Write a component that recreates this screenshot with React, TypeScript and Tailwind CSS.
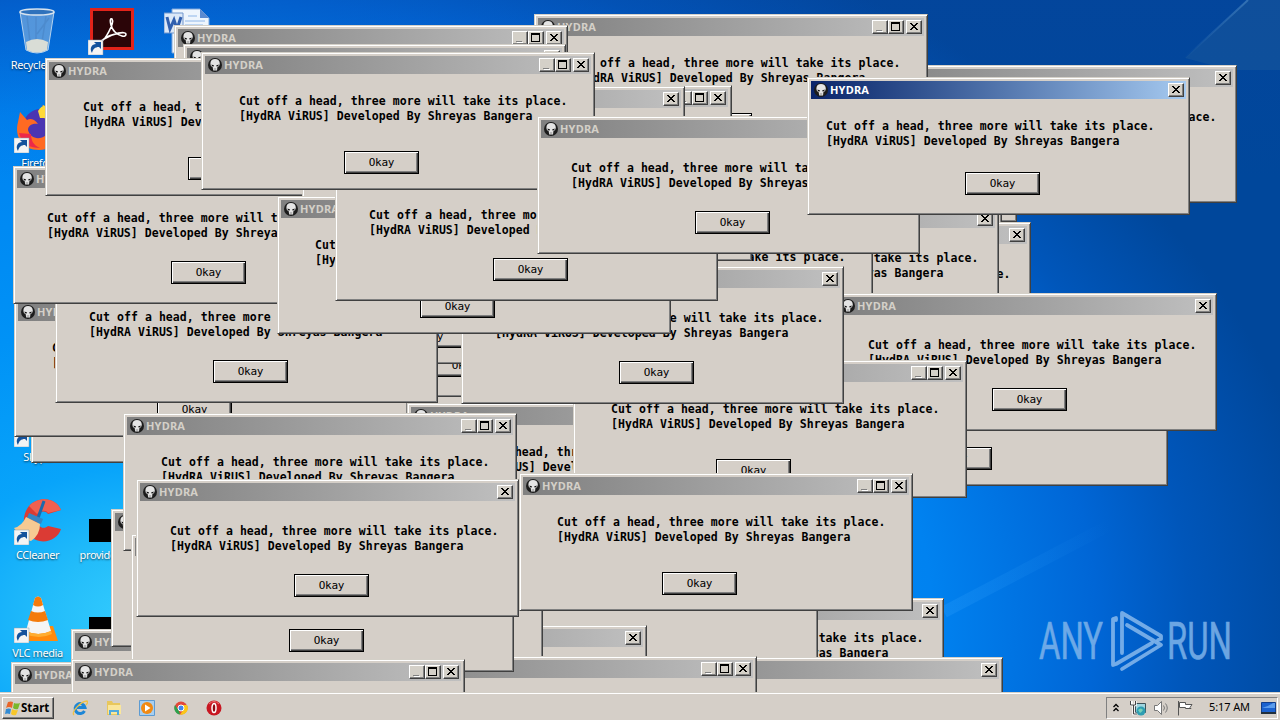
import clsx from 'clsx';
import type { ReactNode } from 'react';

type Win = {
  x: number;
  y: number;
  // "sizable" windows carry minimize / maximize buttons
  kind: 'sizable' | 'fixed' | 'active' | 'shifted';
};

// back to front
const WINDOWS: Win[] = [
  { x: 854, y: 65, kind: 'fixed' },
  { x: 31, y: 325, kind: 'fixed' },
  { x: 200, y: 340, kind: 'fixed' },
  { x: 14, y: 299, kind: 'sizable' },
  { x: 269, y: 259, kind: 'fixed' },
  { x: 250, y: 226, kind: 'sizable' },
  { x: 55, y: 265, kind: 'fixed' },
  { x: 13, y: 166, kind: 'fixed' },
  { x: 634, y: 84, kind: 'fixed' },
  { x: 619, y: 86, kind: 'fixed' },
  { x: 534, y: 14, kind: 'sizable' },
  { x: 174, y: 25, kind: 'sizable' },
  { x: 183, y: 44, kind: 'fixed' },
  { x: 45, y: 58, kind: 'sizable' },
  { x: 338, y: 85, kind: 'sizable' },
  { x: 302, y: 86, kind: 'fixed' },
  { x: 648, y: 222, kind: 'fixed' },
  { x: 616, y: 206, kind: 'fixed' },
  { x: 479, y: 208, kind: 'sizable' },
  { x: 774, y: 348, kind: 'sizable' },
  { x: 834, y: 293, kind: 'fixed' },
  { x: 407, y: 403, kind: 'sizable' },
  { x: 573, y: 360, kind: 'sizable' },
  { x: 461, y: 266, kind: 'fixed' },
  { x: 369, y: 123, kind: 'fixed' },
  { x: 277, y: 196, kind: 'sizable' },
  { x: 335, y: 163, kind: 'fixed' },
  { x: 201, y: 52, kind: 'sizable' },
  { x: 537, y: 116, kind: 'fixed' },
  { x: 561, y: 598, kind: 'shifted' },
  { x: 424, y: 535, kind: 'sizable' },
  { x: 264, y: 625, kind: 'fixed' },
  { x: 149, y: 570, kind: 'sizable' },
  { x: 620, y: 657, kind: 'fixed' },
  { x: 363, y: 656, kind: 'sizable' },
  { x: 71, y: 629, kind: 'fixed' },
  { x: 111, y: 509, kind: 'fixed' },
  { x: 123, y: 413, kind: 'sizable' },
  { x: 131, y: 534, kind: 'fixed' },
  { x: 136, y: 479, kind: 'fixed' },
  { x: 519, y: 473, kind: 'sizable' },
  { x: 11, y: 662, kind: 'fixed' },
  { x: 71, y: 659, kind: 'sizable' },
  { x: 807, y: 77, kind: 'active' },
];

const TEXT_POS = {
  sizable: 'ml-[34px] mt-[20px]',
  fixed: 'ml-[30px] mt-[23px]',
  active: 'ml-[15px] mt-[20px]',
  shifted: 'ml-[30px] mt-[11px]',
};

const BUTTON_POS = {
  sizable: 'ml-[139px] mt-[27px]',
  fixed: 'ml-[154px] mt-[20px]',
  active: 'ml-[154px] mt-[23px]',
  shifted: 'ml-[154px] mt-[32px]',
};

function SkullIcon() {
  return (
    <svg width="16" height="16" viewBox="0 0 16 16" className="shrink-0">
      <circle cx="8" cy="8" r="7" fill="#1c1c1c" />
      <path d="M3.4 6.2C3.4 3.5 5.4 2 8 2s4.800 1.500 4.800 4.200c0 1.500-.5 2-.8 3l-1.500.6L10 13.500H6.200L5.600 9.800 4 9.200c-.2-1-.6-1.500-.6-3z" fill="#e4e4e4" />
      <path d="M4.500 7.600l2.600.8-.5 1.200-1.700-.5zM11.700 7.600l-2.600.8.5 1.200 1.700-.5z" fill="#111" />
      <path d="M7.300 11v2M8.700 11v2" stroke="#777" strokeWidth=".5" />
    </svg>
  );
}

function CaptionButton({ children }: { children: ReactNode }) {
  return (
    <span className="flex h-[14px] w-4 border border-t-white border-r-[#404040] border-b-[#404040] border-l-white bg-[#d4d0c8] shadow-[inset_-1px_-1px_#808080]">
      <svg width="14" height="12" viewBox="0 0 14 12" shapeRendering="crispEdges">
        {children}
      </svg>
    </span>
  );
}

function HydraWindow({ x, y, kind }: Win) {
  const sizable = kind === 'sizable';
  const active = kind === 'active';

  return (
    <div
      className={clsx(
        'absolute h-[138px] border border-t-[#d4d0c8] border-r-[#404040] border-b-[#404040] border-l-[#d4d0c8] bg-[#d5cfc8] p-[3px] shadow-[inset_1px_1px_#fff,inset_-1px_-1px_#808080]',
        sizable ? 'w-[394px]' : 'w-[383px]',
      )}
      style={{ left: x, top: y }}
    >
      <div
        className={clsx(
          'flex h-[18px] items-center bg-linear-to-r pr-0.5 pl-0.5',
          active ? 'from-[#0a246a] to-[#a6caf0]' : 'from-[#808080] to-[#c0c0c0]',
        )}
      >
        <SkullIcon />
        <span
          className={clsx(
            'ml-px grow font-["Noto_Sans",sans-serif] text-[11px] leading-[18px] font-bold tracking-[0.2px]',
            active ? 'text-white' : 'text-[#d4d0c8]',
          )}
        >
          HYDRA
        </span>
        {sizable && (
          <span className="mr-0.5 flex">
            <CaptionButton>
              <path d="M3 9h6v1H3z" fill="#808080" />
              <path d="M4 10h6v1H4z" fill="#fff" />
            </CaptionButton>
            <CaptionButton>
              <path d="M2 1h9v9H2zM3 3v6h7V3z" fillRule="evenodd" fill="#000" />
            </CaptionButton>
          </span>
        )}
        <CaptionButton>
          <path
            d="M3 2h2v1h1v1h2V3h1V2h2v1h-1v1H9v1H8v1h1v1h1v1h1v1H9V8H8V7H6v1H5v1H3V8h1V7h1V6h1V5H5V4H4V3H3z"
            fill="#000"
          />
        </CaptionButton>
      </div>
      <p
        className={clsx(
          'font-["DejaVu_Sans_Mono",monospace] text-[11.500px] leading-[15px] font-bold tracking-[0.065px] whitespace-pre text-black',
          TEXT_POS[kind],
        )}
      >
        {'Cut off a head, three more will take its place.\n[HydRA ViRUS] Developed By Shreyas Bangera'}
      </p>
      <div
        className={clsx(
          'h-[23px] w-[75px] border border-black bg-[#d5cfc8] text-center font-["DejaVu_Sans_Mono",monospace] text-[11px] leading-[22px] tracking-[-0.25px] text-black shadow-[inset_1px_1px_#fff,inset_-1px_-1px_#404040,inset_-2px_-2px_#808080]',
          BUTTON_POS[kind],
        )}
      >
        Okay
      </div>
    </div>
  );
}

function Shortcut() {
  return (
    <g>
      <path d="M0 33h15v15H0z" fill="#f4f4f4" stroke="#8a9cae" strokeWidth=".5" />
      <path d="M4 46c-3-5 0-9 4-9l-2-2h7v7l-2-2c-4 0-6 2-7 6z" fill="#14529c" />
    </g>
  );
}

function DesktopIcon({ label, children }: { label: string; children?: ReactNode }) {
  return (
    <div className="flex flex-col items-center">
      <svg width="48" height="48" viewBox="0 0 48 48">
        {children}
      </svg>
      <span className="mt-[3px] max-w-[75px] text-center text-[11px] leading-[13px] tracking-[-0.4px] text-white [text-shadow:0_1px_2px_#000a]">
        {label}
      </span>
    </div>
  );
}

function DesktopIcons() {
  return (
    <div className="ml-px grid w-[225px] grid-cols-[73px_75px_77px] grid-rows-[98px_98px_98px_98px_98px_98px_98px] pt-[7px] font-['Noto_Sans',sans-serif]">
      <DesktopIcon label="Recycle Bin">
        <path d="M6 5l6 38q11 6 22 0l6-38z" fill="#7fb0e0" fillOpacity=".65" stroke="#b4d2ee" />
        <path d="M13 9l3 26M22 10v24M32 9l-4 26M35 11L23 27" stroke="#4a86c8" strokeOpacity=".7" strokeWidth="1.500" />
        <path d="M12 35q11-6 22 0l-1 8q-10 5-20 0z" fill="#d9ddd6" />
        <ellipse cx="23" cy="5" rx="17" ry="3" fill="#2f72bc" stroke="#d7e3ee" strokeWidth="1.500" />
      </DesktopIcon>
      <DesktopIcon label="Acrobat Reader DC">
        <path d="M2 1h44v42H2z" fill="#e2231a" />
        <path d="M5 4h38v36H5z" fill="#2b0508" />
        <path d="M13 34c3 1 14-18 11-22-3-2-2 8 3 13 4 4 11 6 11 2 0-3-13-1-22 5-3 2-4 4-2 4" fill="none" stroke="#fff" strokeWidth="1.600" />
        <Shortcut />
      </DesktopIcon>
      <DesktopIcon label="">
        <path d="M8 2h28l9 9v35H8z" fill="#eef5fd" stroke="#7aa5dc" />
        <path d="M36 2v9h9z" fill="#5b8ad0" />
        <path d="M24 9h9M21 14h20M21 18h18" stroke="#8eb6e8" />
        <path d="M0 6h19v20H0z" fill="#dbe8f8" stroke="#7096cd" />
        <path d="M3 10l3 12 4-9 3 9 4-12" fill="none" stroke="#315fae" strokeWidth="3" />
      </DesktopIcon>
      <DesktopIcon label="Firefox">
        <circle cx="27" cy="22" r="18" fill="#4b35b2" />
        <path d="M28 0q20 8 17 27-5 18-20 18C9 45 0 32 4 17l2-10 7 8c5-3 9 1 11 4-6-1-10 2-10 6 2 8 11 11 18 5 8-8 1-22-4-30z" fill="#ff6a22" />
        <path d="M29 0c14 8 18 16 15 27-3-8-8-9-15-15z" fill="#ffd93a" />
        <path d="M24 6q4-6 8-5v12h-6z" fill="#ffd93a" />
        <path d="M5 28c3 11 11 15 21 15-7-3-9-8-9-14z" fill="#ed2949" />
        <Shortcut />
      </DesktopIcon>
      <div className="col-span-2" />
      <div className="col-span-3" />
      <div className="col-span-3" />
      <DesktopIcon label="Skype">
        <circle cx="26" cy="24" r="19" fill="#00aff0" />
        <Shortcut />
      </DesktopIcon>
      <div className="col-span-2" />
      <DesktopIcon label="CCleaner">
        <path d="M47 13C42 0 24-1 15 9c-9 11-6 29 7 34 10 4 22-1 25-11l-13-3c-4 4-11 1-11-6 0-8 7-11 11-6z" fill="#db3b34" />
        <path d="M47 13C42 0 24-1 15 9l8 8c4-4 9-4 11-1z" fill="#f0604f" />
        <path d="M30 4L24 21" stroke="#1b69ab" strokeWidth="3" />
        <path d="M15 16l14 6-2 5-14-6z" fill="#3686c4" />
        <path d="M12 20l14 7q0 11-9 17-9-1-17-13 8-2 12-11z" fill="#f6ca93" />
        <Shortcut />
      </DesktopIcon>
      <DesktopIcon label="providedarea">
        <path d="M1 22h47v23H1z" fill="#000" />
      </DesktopIcon>
      <div />
      <DesktopIcon label="VLC media player">
        <path d="M14 31h25l5 15H8z" fill="#ff8a0d" />
        <path d="M21 3q3-3 6 0l10 33q-13 6-25 0z" fill="#f5f5f5" />
        <path d="M21 3q3-3 6 0l2 7q-5 3-10 0zM17 16q7 3 14 0l3 9q-10 4-20 0z" fill="#f47b0b" />
        <path d="M12 36q12 6 25 0l1 3q-13 6-27 0z" fill="#ffad31" />
        <Shortcut />
      </DesktopIcon>
      <DesktopIcon label="">
        <path d="M1 22h47v23H1z" fill="#000" />
      </DesktopIcon>
    </div>
  );
}

function Watermark() {
  return (
    <svg className="absolute top-[606px] left-[1036px]" width="200" height="70" viewBox="0 0 200 70">
      <g fill="#7fb4ea" stroke="#7fb4ea" strokeWidth=".6" opacity=".85" fontFamily="Roboto, sans-serif" fontSize="51">
        <text x="3" y="53" textLength="64" lengthAdjust="spacingAndGlyphs">
          ANY
        </text>
        <text x="131" y="53" textLength="65" lengthAdjust="spacingAndGlyphs">
          RUN
        </text>
      </g>
      <g fill="none" stroke="#7fb4ea" strokeOpacity=".9" strokeWidth="3.800" strokeLinejoin="round" strokeLinecap="round">
        <path d="M80 14v-2l-3 1v46l3-1 36-21" />
        <path d="M86 47V7l39 23v3l-3 1" />
        <path d="M91 19l34 20-39 24" />
      </g>
    </svg>
  );
}

function Taskbar() {
  return (
    <div className="absolute top-[692px] left-0 flex h-7 w-full items-center border-t border-[#d4d0c8] bg-[#d5cfc8] font-['Noto_Sans',sans-serif] text-black shadow-[inset_0_1px_#fff]">
      <div className="mt-0.5 ml-0.5 flex h-[22px] w-[52px] items-center border border-t-white border-r-[#404040] border-b-[#404040] border-l-white pl-0.5 shadow-[inset_-1px_-1px_#808080]">
        <svg width="16" height="16" viewBox="0 0 16 16" className="shrink-0">
          <path d="M3 2q3-1 5 0L7 8Q4 6 1 8z" fill="#e96528" />
          <path d="M9 3q3 1 6 0l-2 6q-3 1-5-1z" fill="#79b72a" />
          <path d="M1 9q3-1 5 0l-1 5q-3-1-5 0z" fill="#338bd3" />
          <path d="M7 9q3 2 6 1l-2 5q-3 1-5-1z" fill="#f8c72a" />
        </svg>
        <span className="text-[11.5px] font-bold">Start</span>
      </div>
      <div className="mt-0.5 ml-[18px] flex gap-[17.500px]">
        <svg width="16" height="16" viewBox="0 0 16 16">
          <path d="M12.500 11A5 5 0 1 1 13 7.500H5" fill="none" stroke="#1d86d6" strokeWidth="3" />
          <path d="M2 15C-1 12 9 1 15 1c1 1 0 3-1 4" fill="none" stroke="#f1c244" strokeWidth="1.300" />
        </svg>
        <svg width="16" height="16" viewBox="0 0 16 16">
          <path d="M1 3V1h5l1 2h7v12H1z" fill="#e8c75c" />
          <path d="M2 5h13v9H2z" fill="#fae69b" />
          <path d="M3 15v-5h10v5h-2v-3H5v3z" fill="#51a9dc" />
        </svg>
        <svg width="16" height="16" viewBox="0 0 16 16">
          <path d="M.5.500h15v15H.5z" fill="#a8cff0" stroke="#5d9bd2" />
          <circle cx="8" cy="8" r="6" fill="#f18a13" />
          <path d="M6 4.500v7L11.500 8z" fill="#fff" />
        </svg>
        <svg width="16" height="16" viewBox="0 0 16 16">
          <circle cx="8" cy="8" r="6.500" fill="#e2483a" />
          <path d="M2 5l4 6 1 3.500A6.500 6.500 0 0 1 2 5z" fill="#2ba24c" />
          <path d="M8 5h6a6.500 6.500 0 0 1-7 9.500L11 9z" fill="#fbc718" />
          <circle cx="8" cy="8" r="3" fill="#4086ee" stroke="#fff" />
        </svg>
        <svg width="16" height="16" viewBox="0 0 16 16">
          <circle cx="8" cy="8" r="7.500" fill="#c81722" />
          <path d="M3 4q5-5 10 0" stroke="#ef7474" fill="none" />
          <ellipse cx="8" cy="8" rx="2" ry="4.500" fill="#8e0b12" stroke="#fff" strokeWidth="1.500" />
        </svg>
      </div>
      <div className="mt-0.5 mr-0.5 ml-auto flex h-[22px] w-[172px] items-center border border-t-[#808080] border-r-white border-b-white border-l-[#808080] pl-[5px]">
        <svg width="8" height="10" viewBox="0 0 8 10" fill="none" stroke="#000" strokeWidth="1.300">
          <path d="M1.500 4L4 1.500 6.500 4M1.500 8L4 5.500 6.500 8" />
        </svg>
        <svg className="ml-2.5" width="17" height="16" viewBox="0 0 17 16">
          <path d="M5.500 3.500h10v9h-10z" fill="#9ed4de" stroke="#3c5159" />
          <path d="M1.500 1v4h4V1M3.500 5v9H7" fill="none" stroke="#fff" strokeWidth="2.400" />
          <path d="M.5 1v4h5V1M3.500 5v9H7" fill="none" stroke="#444" strokeWidth="1" />
          <circle cx="11" cy="11" r="4.500" fill="#2e9eb2" />
          <path d="M8 10q3-3 5 0-2 3-3 3z" fill="#78cfb7" />
        </svg>
        <svg className="ml-1.5" width="16" height="16" viewBox="0 0 16 16" fill="none" stroke="#777">
          <path d="M1.500 5.500h3l4-4v13l-4-4h-3z" fill="#fff" />
          <path d="M10.500 5.500q2 2.500 0 5M12.500 3.500q3.500 4.500 0 9" />
        </svg>
        <svg className="ml-2" width="16" height="16" viewBox="0 0 16 16" fill="#fff" stroke="#555">
          <path d="M1.500 1v14.500" />
          <path d="M2.500 2.500h6v2h6.500l-2 3 1 1H8.500v-1h-6z" />
        </svg>
        <span className="ml-4 w-[44px] text-[11px] tracking-[-0.1px] whitespace-nowrap">5:17 AM</span>
        <svg className="ml-2" width="15" height="12" viewBox="0 0 15 12">
          <path d="M.5.500h14v10H.5z" fill="#1c62cf" stroke="#123e8c" />
          <path d="M1 6q7-2 11-5h2v5z" fill="#5c9cec" />
          <path d="M0 10h15v2H0z" fill="#222f3c" />
        </svg>
      </div>
    </div>
  );
}

export default function App() {
  return (
    <main className="relative h-[720px] w-[1280px] overflow-hidden bg-[linear-gradient(180deg,#1040a030,#0000_25%),radial-gradient(ellipse_1170px_780px_at_160px_620px,#38d0ff_0%,#22bcfa_10%,#08a4fa_20%,#0092f6_38%,#0082f0_66%,#0066d6_80%,#0056ba_88%,#00479b_100%)]">
      <svg className="absolute top-0 left-0" width="1280" height="692">
        <defs>
          <linearGradient id="ray" gradientUnits="userSpaceOnUse" x1="944" y1="612" x2="1110" y2="525">
            <stop offset="0" stopColor="#3aa8ff" stopOpacity=".22" />
            <stop offset="1" stopColor="#3aa8ff" stopOpacity="0" />
          </linearGradient>
          <linearGradient id="beam" gradientUnits="userSpaceOnUse" x1="1248" y1="0" x2="1185" y2="58">
            <stop offset="0" stopColor="#6aa6d8" stopOpacity=".45" />
            <stop offset="1" stopColor="#6aa6d8" stopOpacity="0" />
          </linearGradient>
        </defs>
        <path d="M1248 0L1185 58" stroke="url(#beam)" strokeWidth="2" />
        <path d="M1280 0H1248L1185 58 1230 70H1280z" fill="#4a7a9a" fillOpacity=".18" />
        <path d="M944 612L1110 525" stroke="url(#ray)" strokeWidth="12" />
      </svg>
      <DesktopIcons />
      {WINDOWS.map((w) => (
        <HydraWindow key={`${w.x}-${w.y}`} {...w} />
      ))}
      <Watermark />
      <Taskbar />
    </main>
  );
}
